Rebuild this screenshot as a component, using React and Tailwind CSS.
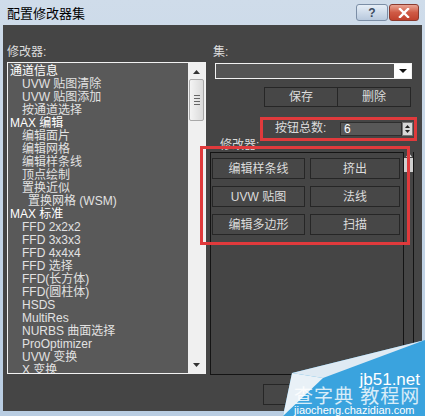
import React from "react";

const items = [
  { t: "通道信息", l: 0 },
  { t: "UVW 贴图清除", l: 1 },
  { t: "UVW 贴图添加", l: 1 },
  { t: "按通道选择", l: 1 },
  { t: "MAX 编辑", l: 0 },
  { t: "编辑面片", l: 1 },
  { t: "编辑网格", l: 1 },
  { t: "编辑样条线", l: 1 },
  { t: "顶点绘制", l: 1 },
  { t: "置换近似", l: 1 },
  { t: "置换网格 (WSM)", l: 2 },
  { t: "MAX 标准", l: 0 },
  { t: "FFD 2x2x2", l: 1 },
  { t: "FFD 3x3x3", l: 1 },
  { t: "FFD 4x4x4", l: 1 },
  { t: "FFD 选择", l: 1 },
  { t: "FFD(长方体)", l: 1 },
  { t: "FFD(圆柱体)", l: 1 },
  { t: "HSDS", l: 1 },
  { t: "MultiRes", l: 1 },
  { t: "NURBS 曲面选择", l: 1 },
  { t: "ProOptimizer", l: 1 },
  { t: "UVW 变换", l: 1 },
  { t: "X 变换", l: 1 },
];

const indent = ["pl-[2px]", "pl-[14px]", "pl-[20px]"];

const buttons = ["编辑样条线", "挤出", "UVW 贴图", "法线", "编辑多边形", "扫描"];

const DarkButton = ({ children, className = "" }) => (
  <div
    className={`flex items-center justify-center bg-[#474747] border border-[#262626] text-[#dcdcdc] text-[12px] ${className}`}
  >
    {children}
  </div>
);

export default function App() {
  return (
    <div className="w-[425px] h-[416px] bg-gradient-to-b from-[#cfdcea] to-[#b9cde2] flex flex-col relative overflow-hidden font-['Liberation_Sans','Noto_Sans_CJK_SC',sans-serif]">
      {/* title bar */}
      <div className="h-[25px] flex items-start justify-between pl-[7px] pr-[6px]">
        <span className="mt-[5px] text-[13px] leading-[17px] text-black">配置修改器集</span>
        <div className="mt-[4px] flex gap-[1px]">
          <div className="w-[32px] h-[17px] rounded-[3px] border border-[#7b8ea6] bg-gradient-to-b from-[#e6eef7] to-[#b8c9dd] flex items-center justify-center text-[12px] font-bold text-[#3c4b60] leading-none">
            ?
          </div>
          <div className="w-[30px] h-[17px] rounded-[3px] border border-[#8a3a2e] bg-gradient-to-b from-[#e8a493] via-[#cf5a45] to-[#c0412d] flex items-center justify-center">
            <svg width="12" height="10" viewBox="0 0 12 10">
              <path d="M2 1 L10 9 M10 1 L2 9" stroke="#fff" strokeWidth="2.4" strokeLinecap="square" />
            </svg>
          </div>
        </div>
      </div>

      {/* content */}
      <div className="flex-1 mx-[3px] mb-[5px] bg-[#454545] flex">
        {/* left column */}
        <div className="w-[203px] pl-[4px] pt-[20px] flex flex-col">
          <span className="text-[12px] leading-[14px] text-[#dcdcdc]">修改器:</span>
          <div className="mt-[3px] w-[199px] h-[312px] border border-[#f2f2f2] bg-[#595959] flex">
            <div className="flex-1 overflow-hidden pt-[2px]">
              {items.map((it, i) => (
                <div
                  key={i}
                  className={`${indent[it.l]} h-[13px] text-[12px] leading-[13px] whitespace-nowrap ${
                    it.l === 0 ? "text-white" : "text-[#e2e2e2]"
                  }`}
                >
                  {it.t}
                </div>
              ))}
            </div>
            <div className="w-[17px] bg-[#f0f0f0] flex flex-col items-center">
              <svg width="7" height="4" viewBox="0 0 7 4" className="mt-[7px]">
                <path d="M0 4 L3.5 0 L7 4 Z" fill="#333" />
              </svg>
              <div className="mt-[5px] w-[15px] h-[42px] rounded-[2px] border border-[#a8a8a8] bg-gradient-to-r from-[#f4f4f4] to-[#dadada] flex flex-col items-center justify-center gap-[2px]">
                <div className="w-[6px] h-[1px] bg-[#666]" />
                <div className="w-[6px] h-[1px] bg-[#666]" />
                <div className="w-[6px] h-[1px] bg-[#666]" />
                <div className="w-[6px] h-[1px] bg-[#666]" />
              </div>
              <div className="flex-1" />
              <svg width="7" height="4" viewBox="0 0 7 4" className="mb-[6px]">
                <path d="M0 0 L3.5 4 L7 0 Z" fill="#333" />
              </svg>
            </div>
          </div>
        </div>

        {/* right column */}
        <div className="flex-1 pt-[20px] flex flex-col">
          <span className="pl-[7px] text-[12px] leading-[14px] text-[#dcdcdc]">集:</span>
          <div className="mt-[4px] ml-[9px] w-[197px] h-[16px] border border-[#f2f2f2] bg-[#555] flex">
            <div className="flex-1" />
            <div className="w-[17px] bg-white flex items-center justify-center">
              <svg width="8" height="4" viewBox="0 0 8 4">
                <path d="M0 0 L8 0 L4 4 Z" fill="#111" />
              </svg>
            </div>
          </div>
          <div className="mt-[8px] ml-[58px] flex h-[20px]">
            <DarkButton className="w-[74px]">保存</DarkButton>
            <DarkButton className="w-[73px] border-l-0">删除</DarkButton>
          </div>
          <div className="mt-[15px] ml-[69px] flex items-center h-[13px]">
            <span className="w-[65px] text-[12px] leading-[13px] text-[#dcdcdc]">按钮总数:</span>
            <div className="w-[62px] h-[14px] bg-[#585858] border border-[#2e2e2e] text-[12px] leading-[12px] text-white pl-[3px]">
              6
            </div>
            <div className="w-[11px] h-[14px] bg-[#d8d8d8] border border-[#777] flex flex-col items-center justify-center gap-[2px]">
              <svg width="5" height="3" viewBox="0 0 5 3">
                <path d="M0 3 L2.5 0 L5 3 Z" fill="#222" />
              </svg>
              <svg width="5" height="3" viewBox="0 0 5 3">
                <path d="M0 0 L5 0 L2.5 3 Z" fill="#222" />
              </svg>
            </div>
          </div>
          <span className="mt-[4px] pl-[14px] text-[12px] leading-[13px] text-[#dcdcdc]">修改器:</span>
          <div className="ml-[4px] flex h-[223px]">
            <div className="w-[194px] border border-[#141414] pt-[5px] pl-[1px]">
              <div className="grid grid-cols-[93px_90px] gap-x-[5px] gap-y-[7px]">
                {buttons.map((b, i) => (
                  <DarkButton
                    key={b}
                    className={`h-[21px] ${i === 0 ? "border-[#2f5f9f]" : ""} ${
                      i === 2 ? "text-[#c4c4c4]" : ""
                    }`}
                  >
                    {b}
                  </DarkButton>
                ))}
              </div>
            </div>
            <div className="w-[10px] border-r border-[#141414] flex flex-col items-center">
              <svg width="6" height="4" viewBox="0 0 6 4" className="mt-[1px]">
                <path d="M0 4 L3 0 L6 4 Z" fill="#ddd" />
              </svg>
              <div className="mt-[1px] w-[9px] h-[14px] bg-[#cfcfcf]" />
            </div>
          </div>
          <div className="mt-[9px] ml-[57px] flex h-[21px]">
            <DarkButton className="w-[78px]"> </DarkButton>
          </div>
        </div>
      </div>

      {/* annotation boxes */}
      <div className="absolute left-[260px] top-[117px] w-[157px] h-[24px] border-[3px] border-[#e03a3c]" />
      <div className="absolute left-[200px] top-[146px] w-[210px] h-[99px] border-[3px] border-[#e03a3c]" />

      {/* watermark */}
      <div className="absolute right-0 bottom-0 w-[150px] h-[76px]">
        <svg width="150" height="76" viewBox="0 0 150 76" className="absolute inset-0">
          <path d="M150 0 L17 33 L8 76 L150 76 Z" fill="#3aa3de" />
          <path d="M150 0 L17 33 L48 38 Z" fill="#dfeaf3" />
          <path d="M17 33 L48 38 L8 76 Z" fill="#e9f1f7" />
        </svg>
        <span className="absolute right-[5px] top-[31px] text-[17px] leading-[17px] text-white">jb51.net</span>
        <span className="absolute left-[19px] top-[47px] text-[19px] leading-[20px] text-white/80 tracking-[1px] whitespace-nowrap">
          查字典 教程网
        </span>
        <span className="absolute left-[19px] bottom-[0px] text-[11px] leading-[11px] text-white whitespace-nowrap">
          jiaocheng.chazidian.com
        </span>
      </div>
    </div>
  );
}
